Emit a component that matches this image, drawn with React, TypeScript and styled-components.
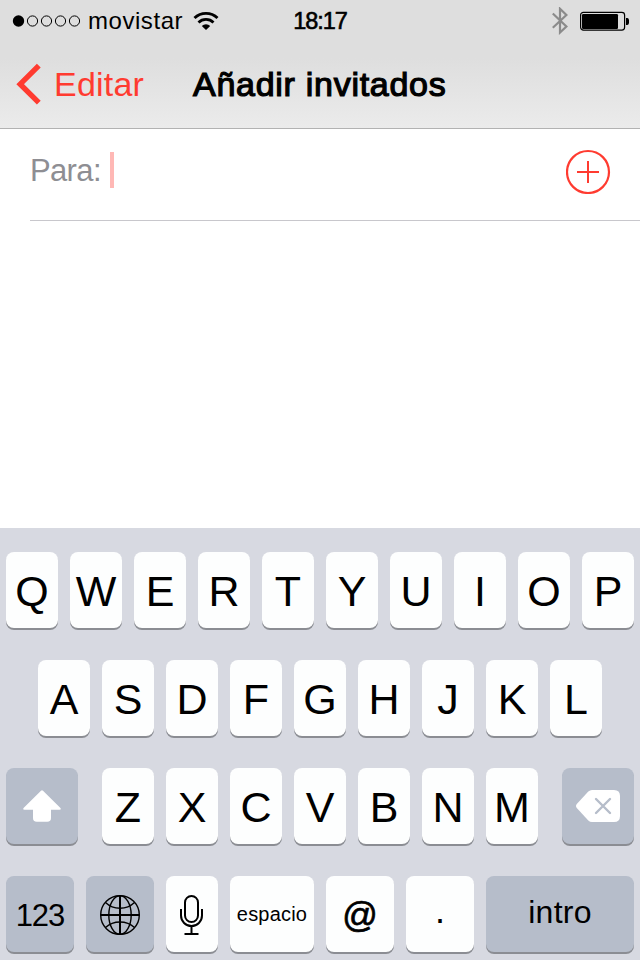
import React from "react";
import styled, { createGlobalStyle } from "styled-components";

const GlobalStyle = createGlobalStyle`
  * { box-sizing: border-box; }
  body {
    margin: 0;
    background: #fff;
    font-family: "Liberation Sans", Arial, sans-serif;
    color: #000;
  }
  svg { display: block; flex: none; }
`;

const accent = "#ff3b30";

const Screen = styled.div`
  width: 640px;
  height: 960px;
  display: flex;
  flex-direction: column;
  overflow: hidden;
  background: #fff;
`;

const Header = styled.header`
  height: 129px;
  flex: none;
  background: linear-gradient(#dedede 0, #dedede 58px, #ebebeb 128px);
  border-bottom: 1px solid #b2b2b2;
`;

const StatusBar = styled.div`
  height: 40px;
  display: grid;
  grid-template-columns: 1fr auto 1fr;
  align-items: center;
  padding: 0 10px 0 12px;
`;

const StatusGroup = styled.div<{ $end?: boolean }>`
  display: flex;
  align-items: center;
  height: 40px;
  gap: ${(p) => (p.$end ? 12 : 0)}px;
  justify-content: ${(p) => (p.$end ? "flex-end" : "flex-start")};
`;

const Carrier = styled.span`
  font-size: 24px;
  line-height: 40px;
  letter-spacing: 0.55px;
  margin: 1px 10px 0 6px;
`;

const Clock = styled.span`
  font-size: 23.5px;
  line-height: 40px;
  letter-spacing: -1.1px;
  margin: 1px 2px 0 0;
  -webkit-text-stroke: 0.6px #000;
`;

const NavBar = styled.nav`
  height: 88px;
  display: grid;
  grid-template-columns: 193px 1fr;
  align-items: center;
`;

const BackButton = styled.button`
  display: flex;
  align-items: center;
  gap: 12px;
  padding: 0 0 0 16px;
  border: 0;
  background: none;
  color: ${accent};
  font: 34px/40px "Liberation Sans", Arial, sans-serif;
  letter-spacing: 0.2px;
`;

const Title = styled.h1`
  margin: 0;
  font-size: 34px;
  line-height: 40px;
  font-weight: 400;
  letter-spacing: 0.72px;
  white-space: nowrap;
  -webkit-text-stroke: 1.2px #000;
`;

const RecipientRow = styled.div`
  margin-left: 30px;
  height: 92px;
  flex: none;
  display: flex;
  align-items: flex-start;
  border-bottom: 1px solid #c8c7cc;
`;

const RecipientLabel = styled.label`
  width: 80px;
  margin-top: 23px;
  font-size: 31px;
  line-height: 38px;
  letter-spacing: -0.65px;
  color: #8e8e93;
`;

const Caret = styled.span`
  width: 4px;
  height: 36px;
  margin-top: 23px;
  background: #ffb8b5;
`;

const AddButton = styled.button`
  margin: 20px 29px 0 auto;
  padding: 0;
  border: 0;
  background: none;
`;

const Body = styled.main`
  flex: 1;
`;

const Keyboard = styled.section`
  height: 432px;
  flex: none;
  padding: 24px 6px 0;
  display: flex;
  flex-direction: column;
  gap: 32px;
  background: #d7d9e1;
`;

const KeyRow = styled.div<{ $spread?: boolean }>`
  display: flex;
  gap: 12px;
  justify-content: ${(p) => (p.$spread ? "space-between" : "center")};
`;

const KeyGroup = styled.div`
  display: flex;
  gap: 12px;
`;

interface KeyProps {
  $width?: number;
  $dark?: boolean;
  $size?: number;
  $padTop?: number;
  $padBottom?: number;
  $spacing?: number;
  $weight?: number;
}

const Key = styled.button<KeyProps>`
  width: ${(p) => p.$width ?? 52}px;
  height: 76px;
  flex: none;
  display: flex;
  align-items: center;
  justify-content: center;
  padding: ${(p) => p.$padTop ?? 2}px 0 ${(p) => p.$padBottom ?? 0}px;
  border: 0;
  border-radius: 8px;
  background: ${(p) => (p.$dark ? "#b6bdca" : "#fdfefe")};
  box-shadow: 0 2px 0 #8b8d93;
  color: #000;
  font-family: "Liberation Sans", Arial, sans-serif;
  font-size: ${(p) => p.$size ?? 43}px;
  line-height: 1;
  letter-spacing: ${(p) => p.$spacing ?? 0}px;
  -webkit-text-stroke: ${(p) => p.$weight ?? 0}px #000;
`;

const SignalDots = () => (
  <svg width="70" height="14" viewBox="0 0 70 14">
    <circle cx="6.5" cy="7" r="5.7" />
    {[20.5, 34.5, 48.5, 62.5].map((x) => (
      <circle key={x} cx={x} cy="7" r="5.1" fill="none" stroke="#000" strokeWidth="1" />
    ))}
  </svg>
);

const WifiIcon = () => (
  <svg width="26" height="20" viewBox="0 0 26 20" fill="none" stroke="#000">
    <path d="M1.5 7A16.5 16.5 0 0 1 24.5 7" strokeWidth="2.9" />
    <path d="M5.5 11.5A10.7 10.7 0 0 1 20.5 11.5" strokeWidth="2.8" />
    <path d="M13 19L8.8 15A6 6 0 0 1 17.2 15Z" fill="#000" stroke="none" />
  </svg>
);

const BluetoothIcon = () => (
  <svg width="16" height="28" viewBox="0 0 16 28" fill="none" stroke="#8b8b8b" strokeWidth="2.2">
    <path d="M.8 6.5L14.4 19.5L8 25.5V1.8L14.4 8L.8 20.7" />
  </svg>
);

const BatteryIcon = () => (
  <svg width="50" height="20" viewBox="0 0 50 20">
    <rect x=".6" y="1.3" width="44" height="17.8" rx="2.8" fill="none" stroke="#000" strokeWidth="1.2" />
    <rect x="2" y="3" width="36" height="15" rx="1.2" />
    <path d="M46 7h1.2a1.8 2.5 0 0 1 1.8 2v3a1.8 2.5 0 0 1-1.8 2H46z" />
  </svg>
);

const BackChevron = () => (
  <svg width="26" height="42" viewBox="0 0 26 42">
    <path d="M22.8 2.7L4.2 21.2L22.8 39.7" fill="none" stroke={accent} strokeWidth="5.4" />
  </svg>
);

const PlusCircle = () => (
  <svg width="45" height="45" viewBox="0 0 45 45" fill="none" stroke={accent} strokeWidth="2.2">
    <circle cx="22" cy="23" r="21" />
    <path d="M11 23H33M22 12V34" strokeWidth="2" />
  </svg>
);

const ShiftIcon = () => (
  <svg width="38" height="32" viewBox="0 0 38 32">
    <path
      d="M18 .7Q19 -.2 20 .7L37.2 17.8Q38.8 19.8 36.5 19.8H28V28Q28 31.8 24.2 31.8H13.8Q10 31.8 10 28V19.8H1.5Q-.8 19.8 .8 17.8Z"
      fill="#fff"
    />
  </svg>
);

const DeleteIcon = () => (
  <svg width="44" height="32" viewBox="0 0 44 32">
    <path d="M16 0H38Q44 0 44 6V26Q44 32 38 32H16Q14 32 12.3 30.4L.8 18Q-.8 16 .8 14L12.3 1.6Q14 0 16 0Z" fill="#fff" />
    <path d="M20 9L34 23M34 9L20 23" fill="none" stroke="#b6bdca" strokeWidth="2.4" strokeLinecap="round" />
  </svg>
);

const GlobeIcon = () => (
  <svg width="40" height="40" viewBox="0 0 40 40" fill="none" stroke="#000" strokeWidth="1.4">
    <circle cx="20" cy="20" r="19.3" />
    <ellipse cx="20" cy="20" rx="11.2" ry="19.3" />
    <path d="M20 .7V39.3M.7 20H39.3" strokeWidth="2" />
    <path d="M5.5 7.5Q11.5 13.2 20 13.2T34.5 7.5M5.5 32.5Q11.5 27 20 27T34.5 32.5" />
  </svg>
);

const MicIcon = () => (
  <svg width="24" height="40" viewBox="0 0 24 40" fill="none" stroke="#000" strokeWidth="2">
    <rect x="5" y="1" width="13" height="26" rx="6.5" />
    <path d="M1 14V20.5A10.5 10.5 0 0 0 22 20.5V14M11.5 31V39M4.5 39H18.5" />
  </svg>
);

const topRow = [..."QWERTYUIOP"];
const homeRow = [..."ASDFGHJKL"];
const lowerRow = [..."ZXCVBNM"];

export default function App() {
  return (
    <Screen>
      <GlobalStyle />
      <Header>
        <StatusBar>
          <StatusGroup>
            <SignalDots />
            <Carrier>movistar</Carrier>
            <WifiIcon />
          </StatusGroup>
          <Clock>18:17</Clock>
          <StatusGroup $end>
            <BluetoothIcon />
            <BatteryIcon />
          </StatusGroup>
        </StatusBar>
        <NavBar>
          <BackButton>
            <BackChevron />
            Editar
          </BackButton>
          <Title>Añadir invitados</Title>
        </NavBar>
      </Header>
      <RecipientRow>
        <RecipientLabel>Para:</RecipientLabel>
        <Caret />
        <AddButton aria-label="Añadir">
          <PlusCircle />
        </AddButton>
      </RecipientRow>
      <Body />
      <Keyboard>
        <KeyRow>
          {topRow.map((c) => (
            <Key key={c} $padTop={3}>{c}</Key>
          ))}
        </KeyRow>
        <KeyRow>
          {homeRow.map((c) => (
            <Key key={c} $padTop={3}>{c}</Key>
          ))}
        </KeyRow>
        <KeyRow $spread>
          <Key $width={72} $dark aria-label="Mayúsculas" $padTop={0}>
            <ShiftIcon />
          </Key>
          <KeyGroup>
            {lowerRow.map((c) => (
              <Key key={c} $padTop={3}>{c}</Key>
            ))}
          </KeyGroup>
          <Key $width={72} $dark aria-label="Borrar" $padTop={0}>
            <DeleteIcon />
          </Key>
        </KeyRow>
        <KeyRow>
          <Key $width={68} $dark $size={31} $spacing={-1}>123</Key>
          <Key $width={68} $dark aria-label="Idioma">
            <GlobeIcon />
          </Key>
          <Key aria-label="Dictado">
            <MicIcon />
          </Key>
          <Key $width={84} $size={20} $spacing={0.2} $padTop={0}>espacio</Key>
          <Key $width={68} $size={35} $weight={0.7} $padTop={0}>@</Key>
          <Key $width={68} $size={36} $padTop={0} $padBottom={6}>.</Key>
          <Key $width={148} $dark $size={32} $spacing={0.3} $padTop={0} $padBottom={4}>intro</Key>
        </KeyRow>
      </Keyboard>
    </Screen>
  );
}
